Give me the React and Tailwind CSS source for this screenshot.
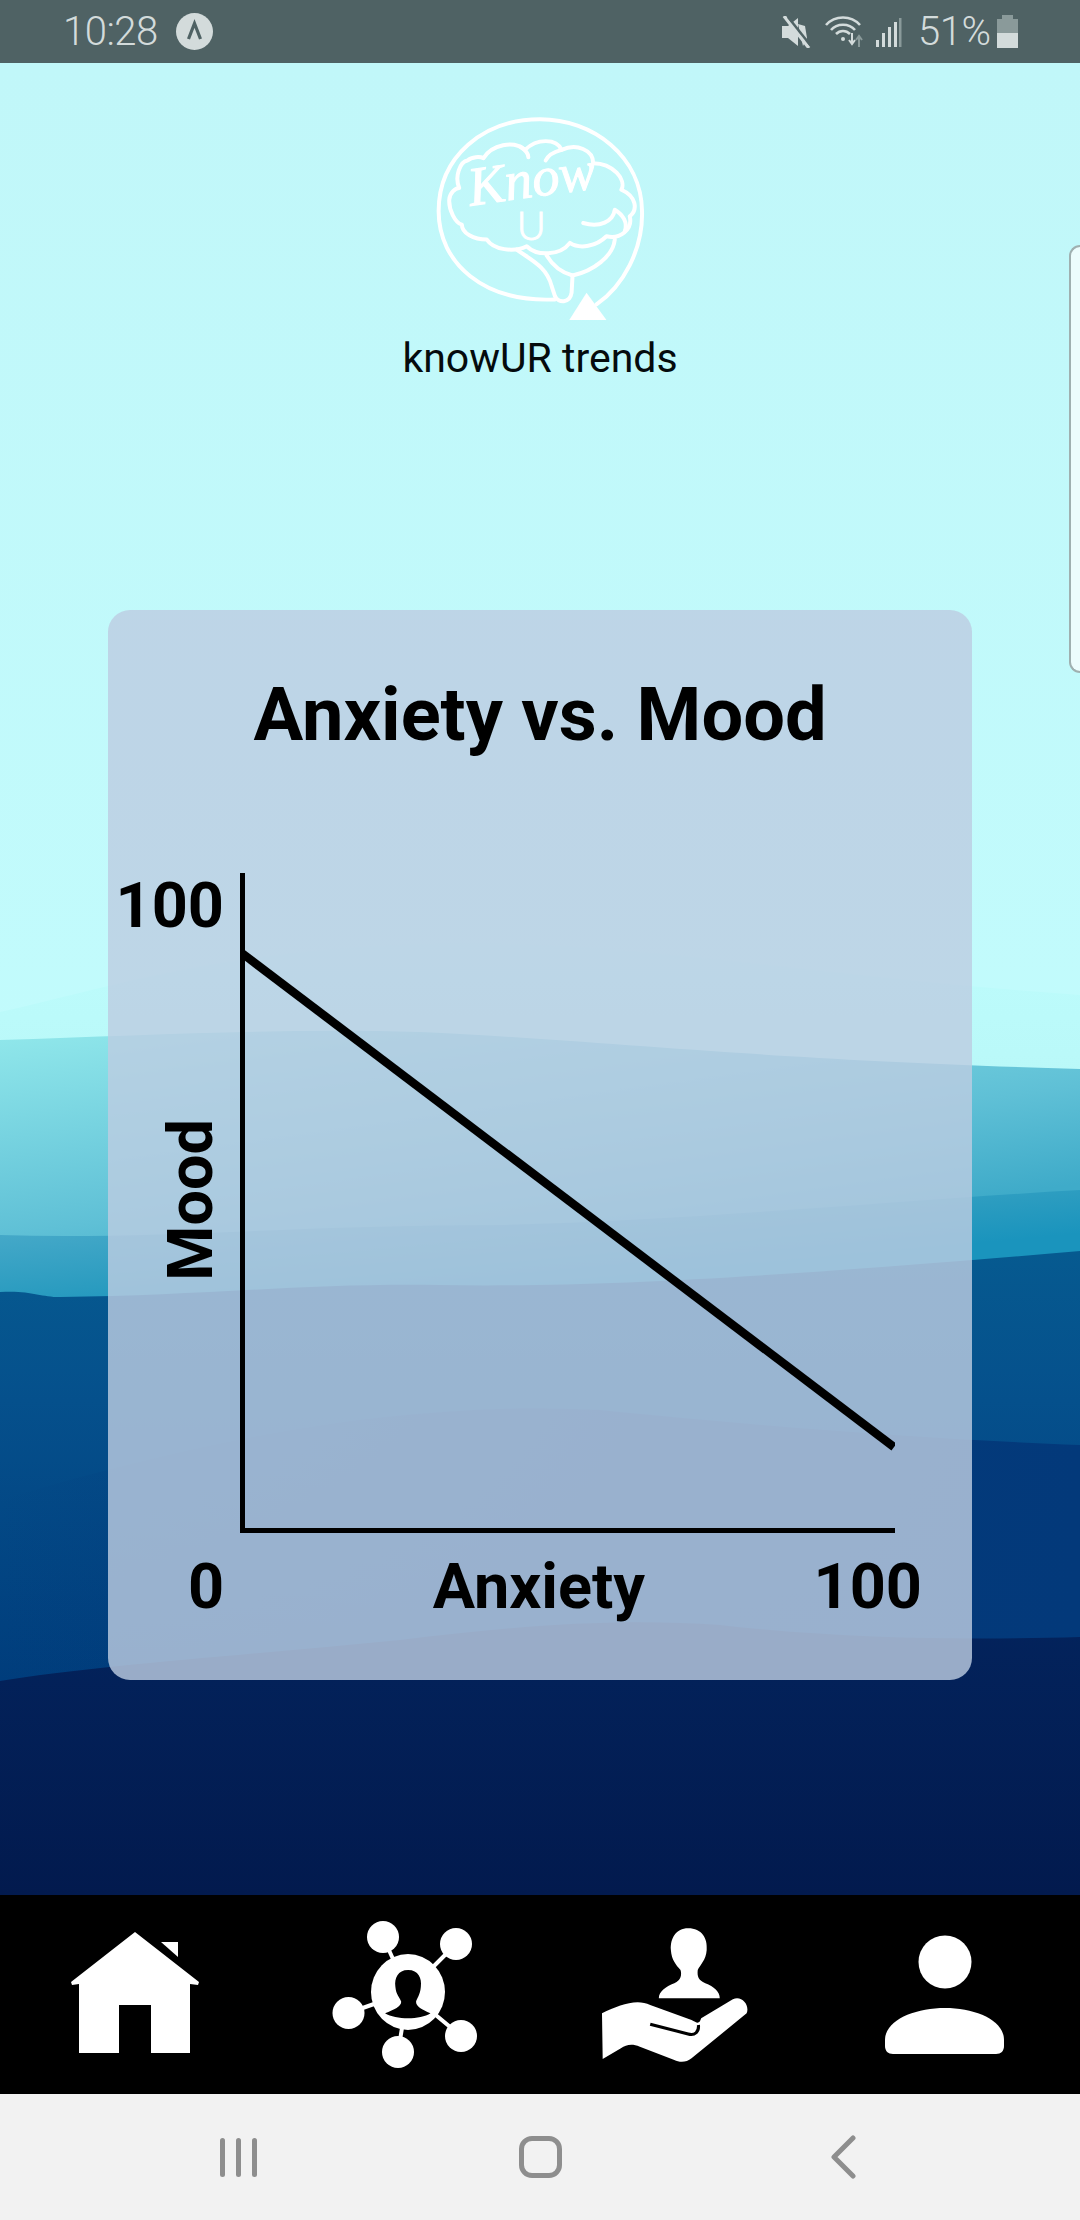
import React from "react";

const bodyFont = "font-['Roboto','Liberation_Sans',sans-serif]";

function StatusBar() {
  return (
    <div className={`flex h-[63px] shrink-0 items-center bg-[#4f6264] pl-[63px] pr-[62px] text-[#d3dbdb] ${bodyFont}`}>
      <span className="w-[95px] text-[40px] font-light leading-[63px] tracking-[-0.5px]">10:28</span>
      <svg className="ml-[18px] h-[37px] w-[37px]" viewBox="0 0 37 37">
        <circle cx="18.5" cy="18.5" r="18.5" fill="#d3dbdb" />
        <path d="M12.5 26 L18.5 10.5 L24.5 26" fill="none" stroke="#4f6264" strokeWidth="3.2" />
      </svg>
      <div className="ml-auto flex items-center">
        <svg className="h-[32px] w-[30px]" viewBox="0 0 30 32">
          <path d="M1 10 L7 10 L17 2 L17 30 L7 22 L1 22 Z" fill="#d3dbdb" />
          <path d="M17 8 L24 10 L26 22 L22 30 Z" fill="#d3dbdb" />
          <path d="M3 0 L28 32" stroke="#d3dbdb" strokeWidth="3.4" />
          <path d="M7 1 L30 30" stroke="#4f6264" strokeWidth="2.5" />
        </svg>
        <svg className="ml-[14px] h-[32px] w-[38px]" viewBox="0 0 38 32">
          <g fill="none" stroke="#d3dbdb" strokeWidth="2.6">
            <path d="M1 9 C 10 -1, 26 -1, 35 9" />
            <path d="M6 14 C 12 7, 24 7, 30 14" />
            <path d="M11 18 C 15 14, 21 14, 25 18" />
          </g>
          <circle cx="18" cy="23" r="2" fill="#d3dbdb" />
          <path d="M27 17 L27 27 M24 24 L27 28 L30 24" fill="none" stroke="#d3dbdb" strokeWidth="2" />
          <path d="M34 31 L34 21 M31 24 L34 20 L37 24" fill="none" stroke="#8a9a9a" strokeWidth="2" />
        </svg>
        <svg className="ml-[12px] h-[32px] w-[27px]" viewBox="0 0 27 32">
          <rect x="1" y="24" width="3" height="7" fill="#d3dbdb" />
          <rect x="7" y="17" width="3" height="14" fill="#d3dbdb" />
          <rect x="13" y="11" width="3" height="20" fill="#d3dbdb" />
          <rect x="19" y="6" width="3" height="25" fill="#d3dbdb" />
          <rect x="24" y="2" width="2.5" height="29" fill="#8a9a9a" />
        </svg>
        <span className="ml-[16px] w-[70px] text-[40px] font-light leading-[63px] tracking-[-0.5px]">51%</span>
        <svg className="ml-[9px] h-[33px] w-[21px]" viewBox="0 0 21 33">
          <rect x="5" y="0" width="11" height="5" fill="#8a9a9a" />
          <rect x="0" y="4" width="21" height="14" fill="#8a9a9a" />
          <rect x="0" y="18" width="21" height="15" fill="#d3dbdb" />
        </svg>
      </div>
    </div>
  );
}

function Waves() {
  return (
    <svg className="absolute inset-0 h-full w-full" viewBox="0 63 1080 1832" preserveAspectRatio="none">
      <defs>
        <linearGradient id="sky" x1="0" y1="0" x2="0" y2="1">
          <stop offset="0" stopColor="#c1f7f9" />
          <stop offset="1" stopColor="#c2ffff" />
        </linearGradient>
        <linearGradient id="w1" x1="0" y1="0" x2="0" y2="1">
          <stop offset="0" stopColor="#bdfcfc" />
          <stop offset="1" stopColor="#b6f5f5" />
        </linearGradient>
        <linearGradient id="w2" gradientUnits="userSpaceOnUse" x1="0" y1="1040" x2="40" y2="1328">
          <stop offset="0" stopColor="#8fe6ea" />
          <stop offset="0.667" stopColor="#5fc0d6" />
          <stop offset="1" stopColor="#3fabc9" />
        </linearGradient>
        <linearGradient id="w3" gradientUnits="userSpaceOnUse" x1="0" y1="1236" x2="9" y2="1333">
          <stop offset="0" stopColor="#44a8c8" />
          <stop offset="0.6" stopColor="#2b9cc0" />
          <stop offset="1" stopColor="#1a94bd" />
        </linearGradient>
        <linearGradient id="w4" gradientUnits="userSpaceOnUse" x1="0" y1="1250" x2="0" y2="1681">
          <stop offset="0" stopColor="#065a90" />
          <stop offset="0.35" stopColor="#05508c" />
          <stop offset="1" stopColor="#003d7c" />
        </linearGradient>
        <linearGradient id="w5" x1="0" y1="0" x2="1" y2="0">
          <stop offset="0" stopColor="#03397a" stopOpacity="0" />
          <stop offset="0.6" stopColor="#03397a" stopOpacity="0.85" />
          <stop offset="1" stopColor="#03397a" stopOpacity="1" />
        </linearGradient>
        <linearGradient id="w6" x1="0" y1="0" x2="0" y2="1">
          <stop offset="0" stopColor="#03235c" />
          <stop offset="1" stopColor="#021a4e" />
        </linearGradient>
      </defs>
      <rect x="0" y="63" width="1080" height="1832" fill="url(#sky)" />
      <path d="M0 1012 C 120 985, 200 955, 400 945 C 600 935, 800 975, 1080 995 L1080 1200 L0 1200 Z" fill="url(#w1)" />
      <path d="M0 1040 C 150 1035, 280 1028, 420 1032 C 600 1040, 760 1060, 1080 1069 L1080 1300 L0 1300 Z" fill="url(#w2)" />
      <path d="M0 1235 C 150 1240, 300 1225, 500 1225 C 700 1220, 900 1200, 1080 1190 L1080 1320 L0 1320 Z" fill="url(#w3)" />
      <path d="M0 1292 C 30 1290, 40 1297, 60 1297 C 200 1296, 300 1283, 440 1285 C 600 1288, 800 1275, 1080 1251 L1080 1700 L0 1700 Z" fill="url(#w4)" />
      <path d="M0 1500 C 200 1440, 400 1400, 600 1410 C 800 1430, 950 1440, 1080 1445 L1080 1700 L0 1700 Z" fill="url(#w5)" />
      <path d="M0 1681 C 100 1665, 250 1655, 400 1640 C 520 1625, 620 1618, 720 1625 C 850 1640, 980 1640, 1080 1637 L1080 1895 L0 1895 Z" fill="url(#w6)" />
    </svg>
  );
}

function Logo() {
  return (
    <svg className="h-[226px] w-[320px]" viewBox="0 0 960 680">
      <g fill="none" stroke="#ffffff" strokeWidth="12" strokeLinecap="round" strokeLinejoin="round">
        <path d="M650 615 C 730 560, 790 450, 787 335 C 785 170, 640 58, 480 58 C 310 58, 175 170, 175 335 C 175 490, 310 610, 525 600" />
        <path d="M245 375 C 225 370, 205 330, 207 300 C 208 280, 225 265, 237 265 C 222 230, 240 185, 262 182 C 275 170, 300 170, 310 175 C 335 135, 400 120, 435 150 C 470 115, 530 115, 545 150 C 590 130, 640 150, 640 190 C 700 190, 740 240, 725 270 C 770 290, 775 330, 750 350 C 760 390, 720 420, 680 410 C 650 440, 600 450, 570 430 C 540 470, 470 470, 440 440 C 400 460, 340 450, 320 420 C 280 420, 245 400, 245 375 Z" />
        <path d="M420 140 C 435 150, 445 160, 445 172" />
        <path d="M545 150 C 525 155, 505 165, 497 182" />
        <path d="M610 370 C 660 385, 700 365, 705 330 C 730 345, 745 370, 735 395" />
        <path d="M410 450 C 450 480, 500 500, 515 560 L 525 590 C 535 612, 570 612, 575 580 L 578 528 C 640 515, 700 470, 705 420" />
        <path d="M500 468 C 525 510, 555 522, 578 528" />
      </g>
      <path d="M568 662 L680 662 L620 580 Z" fill="#ffffff" />
      <text x="272" y="318" fill="#ffffff" stroke="#ffffff" strokeWidth="3" fontSize="165" fontStyle="italic" transform="rotate(-8 272 318)" className="font-['Liberation_Serif',serif]">Know</text>
      <text x="410" y="420" fill="#ffffff" stroke="#ffffff" strokeWidth="3" fontSize="120" className="font-['Lato',sans-serif] font-light">U</text>
    </svg>
  );
}

function Chart() {
  return (
    <div className={`relative h-[1070px] w-[864px] rounded-[22px] bg-[rgba(189,204,225,0.81)] text-black ${bodyFont}`}>
      <h1 className="pt-[60px] text-center text-[74px] font-bold leading-[90px]">Anxiety vs. Mood</h1>
      <div className="mt-[113px] flex h-[660px]">
        <div className="flex w-[132px] flex-col items-end pr-[16px] font-bold">
          <span className="text-[63px] leading-[66px]">100</span>
          <span className="mr-[3px] mt-[180px] rotate-180 text-[63px] leading-[60px] [writing-mode:vertical-rl]">Mood</span>
        </div>
        <div className="h-[660px] w-[655px] border-b-[5px] border-l-[5px] border-black">
          <svg className="h-[655px] w-[650px]" viewBox="245 873 650 655">
            <path d="M239 951 L894 1447" stroke="#000000" strokeWidth="8.5" fill="none" />
          </svg>
        </div>
      </div>
      <div className="mt-[18px] flex justify-between pl-[80px] pr-[50px] text-[63px] font-bold leading-[72px]">
        <span>0</span>
        <span className="ml-[40px]">Anxiety</span>
        <span>100</span>
      </div>
    </div>
  );
}

function TabBar() {
  return (
    <div className="grid h-[199px] shrink-0 grid-cols-4 bg-black">
      <svg className="h-[199px] w-[270px]" viewBox="0 1895 270 199">
        <path d="M135 1932 L199 1982 L198 1985 L190 1984 L190 2053 L151 2053 L151 2005 L119 2005 L119 2053 L79 2053 L79 1984 L72 1985 L71 1982 Z" fill="#fff" />
        <path d="M161 1942 L178 1942 L178 1957 Z" fill="#fff" />
      </svg>
      <svg className="h-[199px] w-[270px]" viewBox="270 1895 270 199">
        <g stroke="#fff" strokeWidth="4">
          <path d="M383 1937 L408 1992 M456 1944 L408 1992 M348.5 2013 L408 1992 M461 2036 L408 1992 M398 2052 L408 1992" />
        </g>
        <g fill="#fff">
          <ellipse cx="383" cy="1937" rx="16" ry="16" />
          <ellipse cx="456" cy="1944" rx="16" ry="16" />
          <ellipse cx="348.5" cy="2013" rx="16" ry="16" />
          <ellipse cx="461" cy="2036" rx="16" ry="16" />
          <ellipse cx="398" cy="2052" rx="16" ry="16" />
          <ellipse cx="408" cy="1992" rx="37" ry="38" />
        </g>
        <g transform="translate(0 1880) scale(0.3444 0.3333)">
          <path d="M1185 270 C 1215 270, 1225 295, 1222 320 C 1220 345, 1210 355, 1208 365 C 1208 380, 1225 388, 1250 400 C 1220 420, 1150 420, 1118 400 C 1145 388, 1165 380, 1165 365 C 1160 350, 1150 345, 1148 320 C 1145 295, 1155 270, 1185 270 Z" fill="#000" />
        </g>
      </svg>
      <svg className="h-[199px] w-[270px]" viewBox="540 1895 270 199">
        <g transform="translate(540 1880) scale(0.3444 0.3333)">
          <path d="M430 145 C 470 145, 487 175, 484 210 C 482 240, 465 255, 458 270 C 456 290, 460 300, 480 310 C 505 320, 522 335, 522 355 L345 355 C 345 335, 365 320, 390 310 C 410 300, 412 285, 408 270 C 395 255, 382 240, 380 210 C 378 175, 395 145, 430 145 Z" fill="#fff" />
          <path d="M180 400 C 230 375, 280 355, 320 375 L440 420 C 455 428, 462 435, 468 415 L560 358 C 585 345, 610 375, 600 400 L440 535 C 425 548, 405 548, 390 540 L290 500 C 265 490, 250 495, 235 505 L182 537 Z" fill="#fff" />
          <path d="M320 433 L430 462 C 450 468, 462 455, 460 435" fill="none" stroke="#000" strokeWidth="9" />
        </g>
      </svg>
      <svg className="h-[199px] w-[270px]" viewBox="810 1895 270 199">
        <circle cx="945" cy="1962" r="26.5" fill="#fff" />
        <path d="M885 2040 C 885 2020, 915 2008, 945 2008 C 975 2008, 1004 2020, 1004 2040 L1004 2046 C 1004 2051, 1001 2054, 996 2054 L893 2054 C 888 2054, 885 2051, 885 2046 Z" fill="#fff" />
      </svg>
    </div>
  );
}

function NavBar() {
  return (
    <div className="grid h-[126px] shrink-0 grid-cols-3 items-center bg-[#f2f2f2]">
      <div className="ml-[220px] flex gap-[11.5px]">
        <span className="h-[39px] w-[4.5px] rounded-full bg-[#8e8e8e]" />
        <span className="h-[39px] w-[4.5px] rounded-full bg-[#8e8e8e]" />
        <span className="h-[39px] w-[4.5px] rounded-full bg-[#8e8e8e]" />
      </div>
      <div className="flex justify-center">
        <span className="h-[42px] w-[43px] rounded-[13px] border-[5px] border-[#8e8e8e]" />
      </div>
      <svg className="ml-[110px] h-[44px] w-[28px]" viewBox="0 0 28 44">
        <path d="M23 3 L4 22 L23 41" fill="none" stroke="#8e8e8e" strokeWidth="5" strokeLinecap="round" strokeLinejoin="round" />
      </svg>
    </div>
  );
}

export default function App() {
  return (
    <div className="relative flex h-[2220px] w-[1080px] flex-col overflow-hidden">
      <StatusBar />
      <main className="relative flex h-[1832px] flex-col items-center pt-[37px]">
        <Waves />
        <div className="relative flex flex-col items-center">
          <Logo />
          <p className={`mt-[7px] text-[41px] leading-[50px] text-[#050b0d] ${bodyFont}`}>knowUR trends</p>
        </div>
        <div className="relative mt-[227px]">
          <Chart />
        </div>
        <div className="absolute right-0 top-[182px] h-[428px] w-[11px] rounded-l-[14px] border-y-2 border-l-2 border-[#9fb0b0] bg-[#ecfdfd]" />
      </main>
      <TabBar />
      <NavBar />
    </div>
  );
}
